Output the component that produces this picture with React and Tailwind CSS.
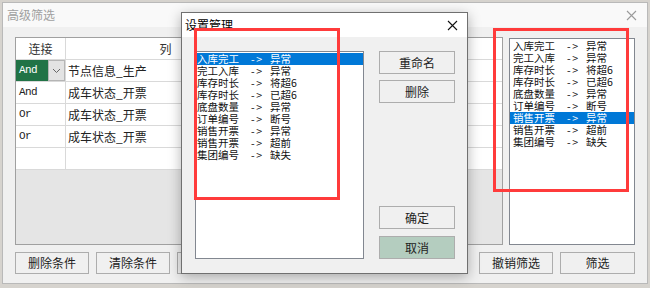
import React from 'react'

const rules = [
  ['入库完工', '异常'],
  ['完工入库', '异常'],
  ['库存时长', '将超6'],
  ['库存时长', '已超6'],
  ['底盘数量', '异常'],
  ['订单编号', '断号'],
  ['销售开票', '异常'],
  ['销售开票', '超前'],
  ['集团编号', '缺失'],
]

const conditions = [
  { link: 'And', col: '节点信息_生产', active: true },
  { link: 'And', col: '成车状态_开票' },
  { link: 'Or', col: '成车状态_开票' },
  { link: 'Or', col: '成车状态_开票' },
  { link: '', col: '' },
]

function RuleList({ selected, pad }) {
  return (
    <div className="pt-[1px]">
      {rules.map((r, i) => (
        <div
          key={i}
          className={
            'h-[12px] leading-[12px] text-[10.5px] whitespace-nowrap flex ' +
            pad +
            (i === selected ? ' bg-[#0078d7] text-white' : ' text-[#111]')
          }
        >
          <span className="w-[54px] shrink-0">{r[0]}</span>
          <span className="w-[19px] shrink-0 tracking-[1.5px]">-&gt;</span>
          <span>{r[1]}</span>
        </div>
      ))}
    </div>
  )
}

function Btn({ children, w = 'w-[74px]', h = 'h-[22px]', tone = 'bg-[#f0f0f0]' }) {
  return (
    <div
      className={
        w + ' ' + h + ' ' + tone +
        ' border border-[#adadad] flex items-center justify-center text-[12px] text-[#222]'
      }
    >
      {children}
    </div>
  )
}

function CloseX({ color }) {
  return (
    <svg width="11" height="11" viewBox="0 0 11 11">
      <path d="M1 1L10 10M10 1L1 10" stroke={color} strokeWidth="1.1" />
    </svg>
  )
}

export default function App() {
  return (
    <div className="relative w-[650px] h-[288px] overflow-hidden bg-[#d6d3ce] font-['Noto_Sans_CJK_SC',sans-serif]">
      {/* background window */}
      <div className="absolute left-[2px] top-[2px] w-[646px] h-[282px] border border-[#b9b9b9] bg-[#f0f0f0] flex flex-col">
        <div className="h-[24px] bg-[#f9f9f9] flex items-center justify-between pl-[4px] pr-[10px]">
          <span className="text-[12px] text-[#a0a0a0]">高级筛选</span>
          <CloseX color="#9a9a9a" />
        </div>
        <div className="flex-1 flex flex-col pl-[12px] pr-[12px] pt-[10px] pb-[9px]">
          <div className="flex gap-[6px]">
            {/* condition table */}
            <div className="relative w-[488px] h-[208px] border border-[#a0a0a0] bg-[#e5e5e5]">
              <div className="grid grid-cols-[50px_200px_1fr] bg-white text-[12px] text-[#333]">
                <div className="h-[22px] border-r border-b border-[#d9d9d9] flex items-center justify-center">连接</div>
                <div className="h-[22px] border-r border-b border-[#d9d9d9] flex items-center justify-center">列</div>
                <div className="h-[22px] border-b border-[#d9d9d9]"></div>
                {conditions.map((c, i) => (
                  <React.Fragment key={i}>
                    <div className="h-[22px] border-r border-b border-[#d9d9d9] flex">
                      {c.active ? (
                        <>
                          <div className="w-[32px] bg-[#217346] text-white flex items-center pl-[3px] font-['Liberation_Mono',monospace] text-[11px] tracking-[-0.6px]">
                            {c.link}
                          </div>
                          <div className="w-[17px] bg-[#e3e3e3] border border-[#b5b5b5] flex items-center justify-center">
                            <svg width="9" height="6" viewBox="0 0 9 6">
                              <path d="M1 1L4.5 4.5L8 1" stroke="#666" strokeWidth="1" fill="none" />
                            </svg>
                          </div>
                        </>
                      ) : (
                        <div className="flex items-center pl-[3px] font-['Liberation_Mono',monospace] text-[11px] tracking-[-0.6px] text-[#222]">
                          {c.link}
                        </div>
                      )}
                    </div>
                    <div className="h-[22px] border-r border-b border-[#d9d9d9] flex items-center pl-[2px] text-[#222]">{c.col}</div>
                    <div className="h-[22px] border-b border-[#d9d9d9]"></div>
                  </React.Fragment>
                ))}
              </div>
              <div className="absolute left-[477px] top-[96px] w-[3px] h-[6px] bg-[#444]"></div>
            </div>
            {/* saved rules list */}
            <div className="mt-[1px] w-[126px] h-[207px] border border-[#828790] bg-white">
              <RuleList selected={6} pad="pl-[3px]" />
            </div>
          </div>
          <div className="mt-[7px] flex justify-between">
            <div className="flex gap-[7px]">
              <Btn>删除条件</Btn>
              <Btn>清除条件</Btn>
              <Btn>保存条件</Btn>
              <Btn>载入条件</Btn>
            </div>
            <div className="flex gap-[7px]">
              <Btn>撤销筛选</Btn>
              <Btn w="w-[75px]">筛选</Btn>
            </div>
          </div>
        </div>
      </div>

      {/* settings dialog */}
      <div className="absolute left-[181px] top-[12px] w-[287px] h-[262px] border border-[#707070] bg-[#f0f0f0] shadow-[0_3px_12px_rgba(0,0,0,0.3)] flex flex-col">
        <div className="h-[24px] bg-white flex items-center justify-between pl-[3px] pr-[9px]">
          <span className="text-[12px] text-black">设置管理</span>
          <CloseX color="#111" />
        </div>
        <div className="flex pl-[13px] pt-[14px]">
          <div className="w-[169px] h-[208px] border border-[#828790] bg-white">
            <RuleList selected={0} pad="pl-[1px]" />
          </div>
          <div className="ml-[15px] h-[208px] flex flex-col">
            <Btn w="w-[76px]" h="h-[23px]">重命名</Btn>
            <div className="mt-[6px]">
              <Btn w="w-[76px]" h="h-[23px]">删除</Btn>
            </div>
            <div className="mt-auto">
              <Btn w="w-[76px]" h="h-[23px]">确定</Btn>
            </div>
            <div className="mt-[7px]">
              <Btn w="w-[76px]" h="h-[23px]" tone="bg-[#b4cdbf]">取消</Btn>
            </div>
          </div>
        </div>
      </div>

      {/* red annotation frames */}
      <div className="absolute left-[194px] top-[28px] w-[146px] h-[172px] border-[3px] border-[#ff3b3b]"></div>
      <div className="absolute left-[493px] top-[28px] w-[136px] h-[164px] border-[3px] border-[#ff3b3b]"></div>
    </div>
  )
}
